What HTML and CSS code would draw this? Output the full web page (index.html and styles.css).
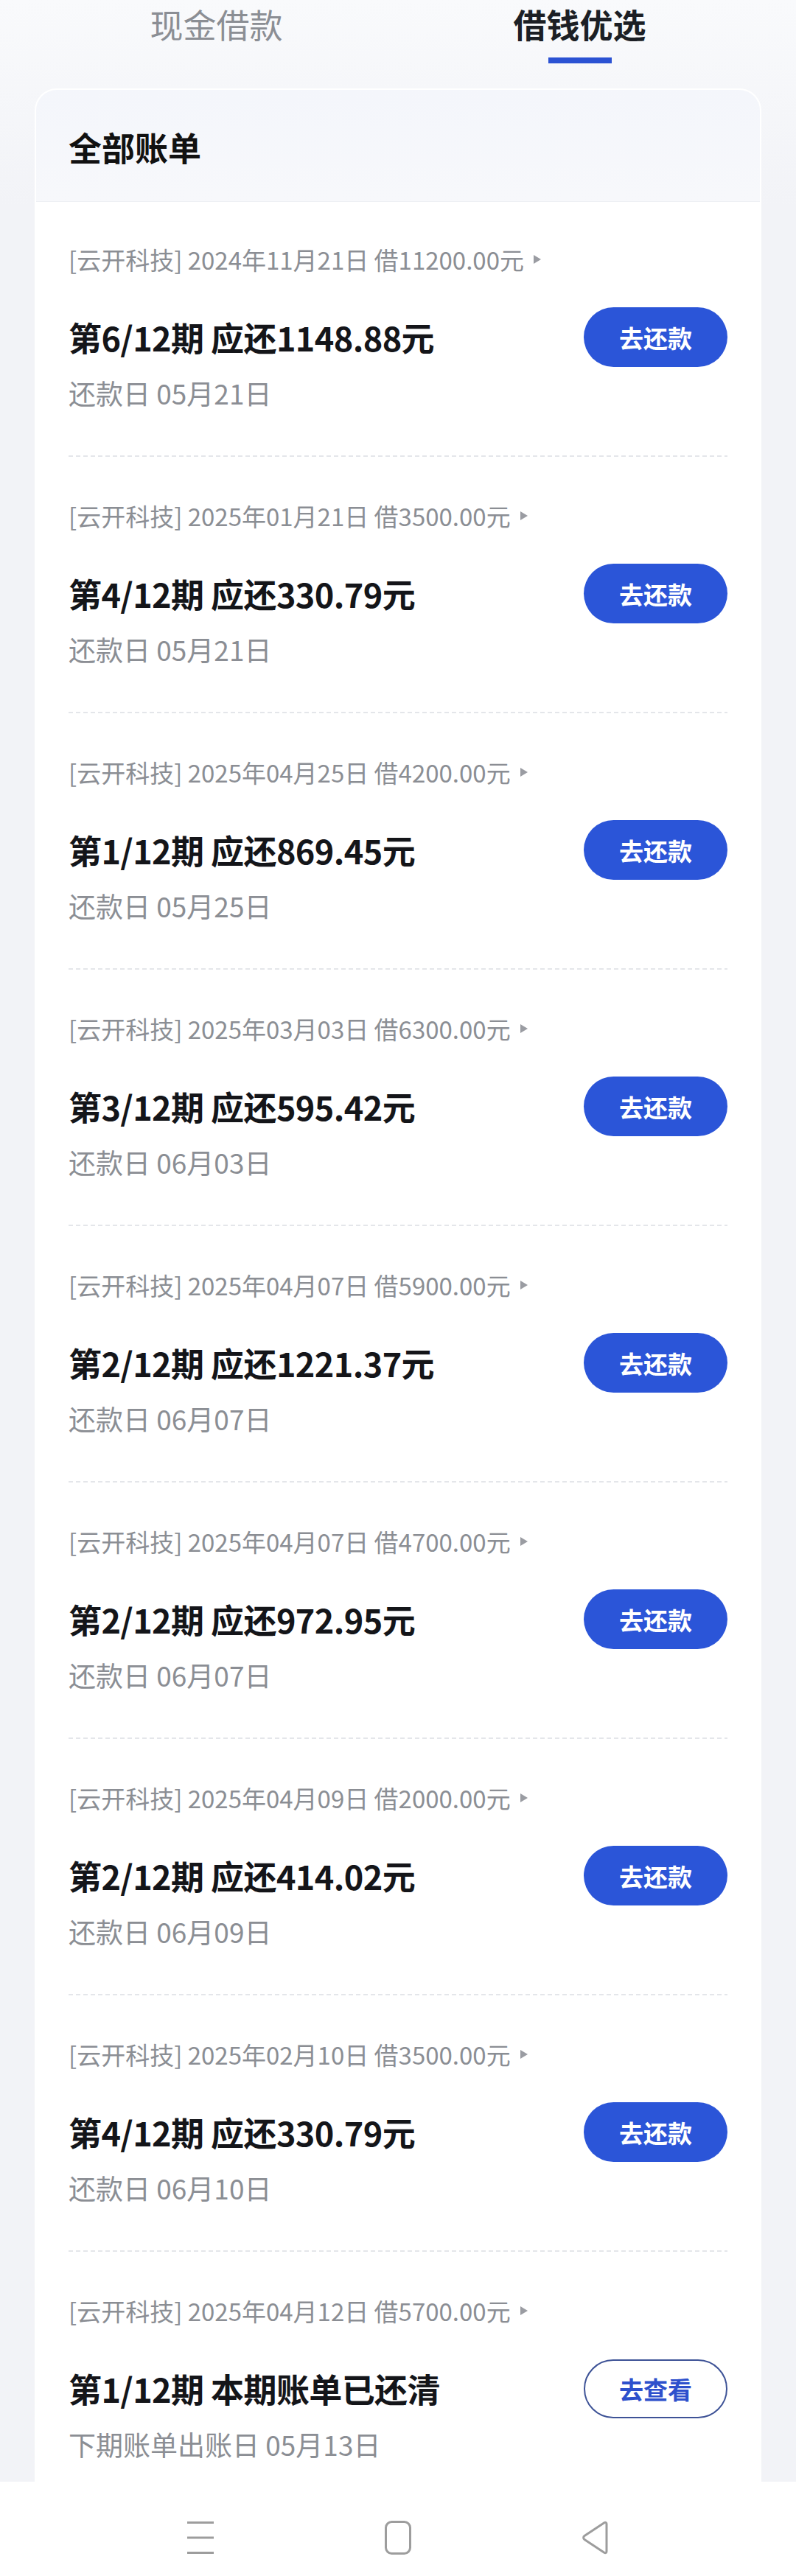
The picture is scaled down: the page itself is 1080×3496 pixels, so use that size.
FILE: index.html
```html
<!DOCTYPE html>
<html lang="zh-CN">
<head>
    <meta charset="UTF-8">
    <meta name="viewport" content="width=device-width, initial-scale=1.0">
    <title>全部账单</title>
    <link rel="stylesheet" href="styles.css">
</head>
<body>

<nav class="tabs">
    <div class="tab">现金借款</div>
    <div class="tab active">借钱优选</div>
</nav>

<main class="card">
    <div class="card-header">全部账单</div>

    <!-- Bill list -->
    <div class="bill">
        <div class="bill-meta">[云开科技] 2024年11月21日 借11200.00元<span class="arrow"></span></div>
        <div class="bill-row">
            <div class="bill-title">第6/12期 应还1148.88元</div>
            <button class="btn">去还款</button>
        </div>
        <div class="bill-date">还款日 05月21日</div>
    </div>

    <div class="bill">
        <div class="bill-meta">[云开科技] 2025年01月21日 借3500.00元<span class="arrow"></span></div>
        <div class="bill-row">
            <div class="bill-title">第4/12期 应还330.79元</div>
            <button class="btn">去还款</button>
        </div>
        <div class="bill-date">还款日 05月21日</div>
    </div>

    <div class="bill">
        <div class="bill-meta">[云开科技] 2025年04月25日 借4200.00元<span class="arrow"></span></div>
        <div class="bill-row">
            <div class="bill-title">第1/12期 应还869.45元</div>
            <button class="btn">去还款</button>
        </div>
        <div class="bill-date">还款日 05月25日</div>
    </div>

    <div class="bill">
        <div class="bill-meta">[云开科技] 2025年03月03日 借6300.00元<span class="arrow"></span></div>
        <div class="bill-row">
            <div class="bill-title">第3/12期 应还595.42元</div>
            <button class="btn">去还款</button>
        </div>
        <div class="bill-date">还款日 06月03日</div>
    </div>

    <div class="bill">
        <div class="bill-meta">[云开科技] 2025年04月07日 借5900.00元<span class="arrow"></span></div>
        <div class="bill-row">
            <div class="bill-title">第2/12期 应还1221.37元</div>
            <button class="btn">去还款</button>
        </div>
        <div class="bill-date">还款日 06月07日</div>
    </div>

    <div class="bill">
        <div class="bill-meta">[云开科技] 2025年04月07日 借4700.00元<span class="arrow"></span></div>
        <div class="bill-row">
            <div class="bill-title">第2/12期 应还972.95元</div>
            <button class="btn">去还款</button>
        </div>
        <div class="bill-date">还款日 06月07日</div>
    </div>

    <div class="bill">
        <div class="bill-meta">[云开科技] 2025年04月09日 借2000.00元<span class="arrow"></span></div>
        <div class="bill-row">
            <div class="bill-title">第2/12期 应还414.02元</div>
            <button class="btn">去还款</button>
        </div>
        <div class="bill-date">还款日 06月09日</div>
    </div>

    <div class="bill">
        <div class="bill-meta">[云开科技] 2025年02月10日 借3500.00元<span class="arrow"></span></div>
        <div class="bill-row">
            <div class="bill-title">第4/12期 应还330.79元</div>
            <button class="btn">去还款</button>
        </div>
        <div class="bill-date">还款日 06月10日</div>
    </div>

    <div class="bill">
        <div class="bill-meta">[云开科技] 2025年04月12日 借5700.00元<span class="arrow"></span></div>
        <div class="bill-row">
            <div class="bill-title">第1/12期 本期账单已还清</div>
            <button class="btn btn-outline">去查看</button>
        </div>
        <div class="bill-date">下期账单出账日 05月13日</div>
    </div>
</main>

<!-- System navigation bar -->
<footer class="navbar">
    <div class="nav-cell">
        <svg width="38" height="46" viewBox="0 0 38 46">
            <path d="M1 2.5h36M1 23h36M1 43.5h36" stroke="#9d9d9d" stroke-width="3" fill="none"/>
        </svg>
    </div>
    <div class="nav-cell">
        <svg width="38" height="46" viewBox="0 0 38 46">
            <rect x="2.5" y="1.5" width="33" height="43" rx="8" stroke="#9d9d9d" stroke-width="3" fill="none"/>
        </svg>
    </div>
    <div class="nav-cell">
        <svg width="38" height="46" viewBox="0 0 38 46">
            <path d="M34 4.5v37c0 2-1.5 2.8-3.2 1.8L4 25.5c-1.8-1.2-1.8-3.8 0-5L30.8 2.7C32.5 1.7 34 2.5 34 4.5z" stroke="#9d9d9d" stroke-width="3" stroke-linejoin="round" fill="none"/>
        </svg>
    </div>
</footer>

</body>
</html>
```

FILE: styles.css
```css
body {
    margin: 0;
    padding: 0;
    font-family: "Noto Sans CJK SC", "Noto Sans", sans-serif;
    background: linear-gradient(#f9fafc 0, #f2f3f7 280px) #f2f3f7;
    color: #141519;
}
.tabs {
    display: flex;
    margin: 0 47px;
    height: 120px;
}
.tab {
    flex: 1;
    text-align: center;
    font-size: 45px;
    line-height: 66px;
    color: #8b8e94;
}
.tab.active {
    color: #1c1f25;
    font-weight: bold;
}
.tab.active::after {
    content: "";
    display: block;
    width: 86px;
    height: 8px;
    margin: 12px auto 0;
    background-color: #2b52d3;
}
.card {
    margin: 0 47px;
    background-color: #fff;
    border: 2px solid #fff;
    border-radius: 30px 30px 0 0;
    overflow: hidden;
}
.card-header {
    padding: 48px 44px 43px;
    font-size: 45px;
    line-height: 60px;
    font-weight: bold;
    color: #111;
    background: linear-gradient(#f4f6fb, #f7f8fb);
    border-bottom: 1px solid #eef0f4;
}
.bill {
    margin: 0 44px;
    padding: 56px 0 65px;
    background-image: repeating-linear-gradient(90deg, #e4e6ea 0 6px, transparent 6px 10px);
    background-size: 100% 2px;
    background-repeat: no-repeat;
    background-position: bottom left;
    border-bottom: 2px solid transparent;
}
.bill-meta {
    display: flex;
    align-items: center;
    font-size: 33px;
    line-height: 44px;
    color: #8b8e94;
}
.arrow {
    width: 0;
    height: 0;
    margin-left: 13px;
    border-top: 6px solid transparent;
    border-bottom: 6px solid transparent;
    border-left: 10px solid #9a9ca2;
}
.bill-row {
    display: flex;
    align-items: center;
    justify-content: space-between;
    margin-top: 43px;
    height: 81px;
}
.bill-title {
    font-size: 45px;
    line-height: 60px;
    font-weight: bold;
    letter-spacing: -0.6px;
    color: #141519;
}
.btn {
    width: 195px;
    height: 81px;
    border: none;
    border-radius: 41px;
    background-color: #2b55d8;
    color: #fff;
    font-family: inherit;
    font-size: 33px;
    font-weight: bold;
    padding: 0;
}
.btn-outline {
    height: 80px;
    background-color: #fff;
    border: 2px solid #3d5296;
    color: #2d50cc;
}
.bill-date {
    margin-top: 13px;
    font-size: 37px;
    line-height: 44px;
    color: #8b8e94;
}
.navbar {
    position: fixed;
    left: 0;
    right: 0;
    bottom: 0;
    height: 128px;
    background-color: #fff;
    display: flex;
    justify-content: center;
    align-items: flex-start;
    padding-top: 53px;
    box-sizing: border-box;
}
.nav-cell {
    width: 268px;
    display: flex;
    justify-content: center;
}
.nav-cell svg {
    display: block;
}
```
